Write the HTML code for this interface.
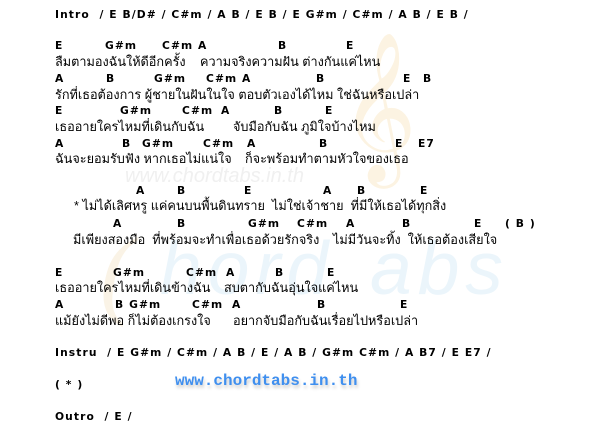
<!DOCTYPE html>
<html><head><meta charset="utf-8"><style>
body{margin:0;width:594px;height:446px;background:#fff;position:relative;overflow:hidden;font-family:"Liberation Sans","Noto Sans CJK SC",sans-serif;font-size:12.7px;color:#000}
.c,.l{position:absolute;white-space:pre;line-height:13px}
.c{font-weight:bold;font-family:"DejaVu Sans",sans-serif;font-size:10.7px;letter-spacing:1.1px}
.wm{position:absolute;white-space:pre}
</style></head><body>
<div class="wm" style="left:100px;top:215px;font:italic 100px 'Liberation Serif',serif;color:#faf3e6;">(</div>
<div class="wm" style="left:160px;top:225px;font:italic 75px 'Liberation Sans',sans-serif;color:#ebf5fb;letter-spacing:6px">hord</div>
<div class="wm" style="left:370px;top:225px;font:italic 75px 'Liberation Sans',sans-serif;color:#ebf5fb;letter-spacing:6px">abs</div>
<div class="wm" style="left:125px;top:165px;font:italic 20px 'Liberation Sans',sans-serif;color:#f0f0f0">www.chordtabs.in.th</div>
<div class="wm" style="left:340px;top:30px;font:130px 'DejaVu Sans',sans-serif;color:#fcf3e2">𝄞</div>
<div class="wm" style="left:175px;top:372px;font:bold 16px 'Liberation Mono',monospace;color:#3f8fef;text-shadow:1px 3px 3px #ccc">www.chordtabs.in.th</div>

<div class="c" style="left:55px;top:8px">Intro  / E B/D# / C#m / A B / E B / E G#m / C#m / A B / E B /</div>

<div class="c" style="left:55px;top:39px">E</div><div class="c" style="left:105px;top:39px">G#m</div><div class="c" style="left:162px;top:39px">C#m A</div><div class="c" style="left:278px;top:39px">B</div><div class="c" style="left:346px;top:39px">E</div>
<div class="l" style="left:55px;top:56px">ลืมตามองฉันให้ดีอีกครั้ง</div><div class="l" style="left:200px;top:56px">ความจริงความฝัน ต่างกันแค่ไหน</div>

<div class="c" style="left:55px;top:72px">A</div><div class="c" style="left:106px;top:72px">B</div><div class="c" style="left:154px;top:72px">G#m</div><div class="c" style="left:206px;top:72px">C#m A</div><div class="c" style="left:316px;top:72px">B</div><div class="c" style="left:403px;top:72px">E</div><div class="c" style="left:423px;top:72px">B</div>
<div class="l" style="left:55px;top:89px">รักที่เธอต้องการ ผู้ชายในฝันในใจ ตอบตัวเองได้ไหม ใช่ฉันหรือเปล่า</div>

<div class="c" style="left:55px;top:104px">E</div><div class="c" style="left:120px;top:104px">G#m</div><div class="c" style="left:182px;top:104px">C#m</div><div class="c" style="left:221px;top:104px">A</div><div class="c" style="left:274px;top:104px">B</div><div class="c" style="left:325px;top:104px">E</div>
<div class="l" style="left:55px;top:121px">เธออายใครไหมที่เดินกับฉัน</div><div class="l" style="left:233px;top:121px">จับมือกับฉัน ภูมิใจบ้างไหม</div>

<div class="c" style="left:55px;top:137px">A</div><div class="c" style="left:122px;top:137px">B</div><div class="c" style="left:142px;top:137px">G#m</div><div class="c" style="left:203px;top:137px">C#m</div><div class="c" style="left:247px;top:137px">A</div><div class="c" style="left:319px;top:137px">B</div><div class="c" style="left:395px;top:137px">E</div><div class="c" style="left:418px;top:137px">E7</div>
<div class="l" style="left:55px;top:153px">ฉันจะยอมรับฟัง หากเธอไม่แน่ใจ</div><div class="l" style="left:245px;top:153px">ก็จะพร้อมทำตามหัวใจของเธอ</div>

<div class="c" style="left:136px;top:184px">A</div><div class="c" style="left:177px;top:184px">B</div><div class="c" style="left:244px;top:184px">E</div><div class="c" style="left:323px;top:184px">A</div><div class="c" style="left:357px;top:184px">B</div><div class="c" style="left:420px;top:184px">E</div>
<div class="l" style="left:74px;top:200px">* ไม่ได้เลิศหรู แค่คนบนพื้นดินทราย  ไม่ใช่เจ้าชาย  ที่มีให้เธอได้ทุกสิ่ง</div>

<div class="c" style="left:113px;top:217px">A</div><div class="c" style="left:177px;top:217px">B</div><div class="c" style="left:248px;top:217px">G#m</div><div class="c" style="left:297px;top:217px">C#m</div><div class="c" style="left:346px;top:217px">A</div><div class="c" style="left:402px;top:217px">B</div><div class="c" style="left:474px;top:217px">E</div><div class="c" style="left:505px;top:217px">( B )</div>
<div class="l" style="left:73px;top:234px">มีเพียงสองมือ  ที่พร้อมจะทำเพื่อเธอด้วยรักจริง</div><div class="l" style="left:333px;top:234px">ไม่มีวันจะทิ้ง  ให้เธอต้องเสียใจ</div>

<div class="c" style="left:55px;top:266px">E</div><div class="c" style="left:113px;top:266px">G#m</div><div class="c" style="left:186px;top:266px">C#m</div><div class="c" style="left:226px;top:266px">A</div><div class="c" style="left:275px;top:266px">B</div><div class="c" style="left:327px;top:266px">E</div>
<div class="l" style="left:55px;top:282px">เธออายใครไหมที่เดินข้างฉัน</div><div class="l" style="left:224px;top:282px">สบตากับฉันอุ่นใจแค่ไหน</div>

<div class="c" style="left:55px;top:298px">A</div><div class="c" style="left:115px;top:298px">B G#m</div><div class="c" style="left:192px;top:298px">C#m</div><div class="c" style="left:232px;top:298px">A</div><div class="c" style="left:317px;top:298px">B</div><div class="c" style="left:400px;top:298px">E</div>
<div class="l" style="left:55px;top:315px">แม้ยังไม่ดีพอ ก็ไม่ต้องเกรงใจ</div><div class="l" style="left:233px;top:315px">อยากจับมือกับฉันเรื่อยไปหรือเปล่า</div>

<div class="c" style="left:55px;top:346px">Instru  / E G#m / C#m / A B / E / A B / G#m C#m / A B7 / E E7 /</div>
<div class="c" style="left:55px;top:378px">( * )</div>
<div class="c" style="left:55px;top:410px">Outro  / E /</div>
</body></html>
